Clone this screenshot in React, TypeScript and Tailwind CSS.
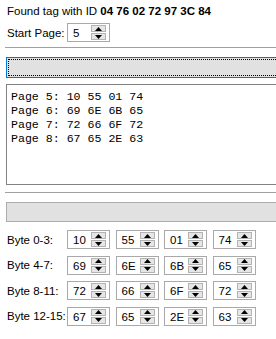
import React from "react";

function Spin({ value }: { value: string }) {
  return (
    <div className="relative w-[43px] h-[19px] border border-[#a9a9a9] bg-white shrink-0">
      <span className="absolute left-[5px] top-[2px] text-[11.5px] leading-[14px] text-black">{value}</span>
      <div className="absolute right-[3px] top-[1px] w-[15px] h-[15px] flex flex-col gap-[1px]">
        <div className="flex-1 border border-[#b3b3b3] bg-[#e6e6e6] flex items-center justify-center">
          <svg width="7" height="4" viewBox="0 0 7 4"><path d="M3.5 0 L7 4 L0 4 Z" fill="#000" /></svg>
        </div>
        <div className="flex-1 border border-[#b3b3b3] bg-[#e6e6e6] flex items-center justify-center">
          <svg width="7" height="4" viewBox="0 0 7 4"><path d="M0 0 L7 0 L3.5 4 Z" fill="#000" /></svg>
        </div>
      </div>
    </div>
  );
}

const rows: [string, string[]][] = [
  ["Byte 0-3:", ["10", "55", "01", "74"]],
  ["Byte 4-7:", ["69", "6E", "6B", "65"]],
  ["Byte 8-11:", ["72", "66", "6F", "72"]],
  ["Byte 12-15:", ["67", "65", "2E", "63"]],
];

export default function App() {
  return (
    <div
      className="w-[276px] h-[339px] bg-white overflow-hidden flex flex-col text-black"
      style={{ fontFamily: '"Liberation Sans", Arial, sans-serif' }}
    >
      <div className="mt-[4px] ml-[7px] text-[11.5px] leading-[14px] whitespace-nowrap">
        Found tag with ID <span className="font-bold">04 76 02 72 97 3C 84</span>
      </div>
      <div className="mt-[5px] flex items-center">
        <span className="ml-[7px] w-[60px] text-[11.5px] leading-[14px]">Start Page:</span>
        <Spin value="5" />
      </div>
      <div className="mt-[5px] ml-[5px] h-px w-[300px] bg-[#a0a0a0] shrink-0" />
      <div className="mt-[9px] ml-[6px] h-[21px] w-[300px] shrink-0 border border-[#0078d7] bg-[#e1e1e1] p-px">
        <div className="w-full h-full border border-dotted border-black" />
      </div>
      <div
        className="mt-[6px] ml-[6px] h-[101px] w-[300px] shrink-0 border border-[#828282] pl-[4px] pt-[5px] text-[11.6px] leading-[14px] whitespace-pre"
        style={{ fontFamily: '"Liberation Mono", "Courier New", monospace' }}
      >
        {"Page 5: 10 55 01 74\nPage 6: 69 6E 6B 65\nPage 7: 72 66 6F 72\nPage 8: 67 65 2E 63"}
      </div>
      <div className="mt-[7px] ml-[5px] h-px w-[300px] bg-[#a0a0a0] shrink-0" />
      <div className="mt-[9px] ml-[6px] h-[20px] w-[300px] shrink-0 border border-[#adadad] bg-[#e1e1e1]" />
      <div className="mt-[8px] flex flex-col gap-[6.5px]">
        {rows.map(([label, vals]) => (
          <div key={label} className="flex items-center h-[19px]">
            <span className="ml-[7px] w-[60px] text-[11.5px] leading-[14px] whitespace-nowrap">{label}</span>
            <div className="flex gap-[5.5px]">
              {vals.map((v, i) => (
                <Spin key={i} value={v} />
              ))}
            </div>
          </div>
        ))}
      </div>
    </div>
  );
}
